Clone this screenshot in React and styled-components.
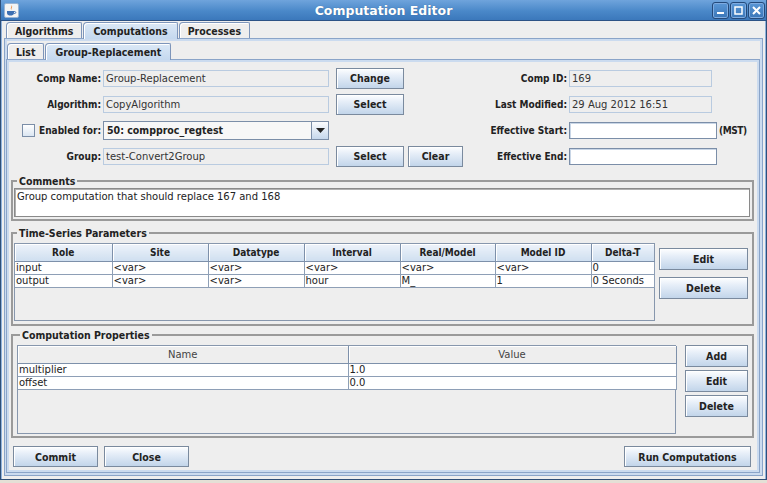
import styled, { createGlobalStyle } from "styled-components";

const GlobalStyle = createGlobalStyle`
  html, body {
    margin: 0;
    padding: 0;
    background: #e4e0d6;
  }
  body {
    width: 767px;
    height: 483px;
    overflow: hidden;
    font-family: "DejaVu Sans", sans-serif;
  }
  * { box-sizing: border-box; }
`;

const BOLD = `"DejaVu Sans Condensed", "DejaVu Sans", sans-serif`;

const Window = styled.div`
  width: 767px;
  height: 480px;
  display: flex;
  flex-direction: column;
  background: #eeeeee;
  border: 1px solid #2f4f78;
  border-top: none;
`;

const TitleBar = styled.div`
  height: 21px;
  flex-shrink: 0;
  display: grid;
  grid-template-columns: 60px 1fr 60px;
  align-items: center;
  background: linear-gradient(#6fa4dc, #4a88c9 55%, #3b78bb);
  border-bottom: 1px solid #2c5285;
  color: #fff;
`;

const Title = styled.div`
  text-align: center;
  font-family: "DejaVu Sans", sans-serif;
  font-weight: bold;
  font-size: 12.5px;
  text-shadow: 0 0 1px rgba(0, 0, 0, 0.3);
`;

const AppIcon = styled.div`
  margin-left: 3px;
  width: 15px;
  height: 15px;
  display: flex;
  align-items: center;
  justify-content: center;
  background: #f4f4f4;
  border: 1px solid #9ab4d4;
  border-radius: 2px;
`;

const Controls = styled.div`
  display: flex;
  justify-content: flex-end;
  gap: 1px;
  padding-right: 1px;
`;

const CtrlButton = styled.div`
  width: 17px;
  height: 17px;
  border: 1px solid #244a7a;
  border-radius: 3px;
  box-shadow: inset 0 0 0 1px #7eabe0;
  background: linear-gradient(#5a97d6, #3a76b8);
  display: flex;
  align-items: center;
  justify-content: center;
`;

const Frame = styled.div`
  flex: 1;
  display: flex;
  flex-direction: column;
  padding: 0 2px 3px 2px;
  border-left: 1px solid #8fb2dc;
  border-right: 1px solid #8fb2dc;
`;

const TabStrip = styled.div`
  display: flex;
  align-items: flex-end;
  height: 17px;
  flex-shrink: 0;
  padding-left: ${(p) => p.$indent}px;
  gap: 1px;
`;

const Tab = styled.div`
  height: ${(p) => (p.$active ? 17 : 16)}px;
  padding: 0 ${(p) => p.$pad || 9}px;
  display: flex;
  align-items: center;
  font-family: ${BOLD};
  font-weight: bold;
  font-size: 10.5px;
  color: #222;
  border: 1px solid #7d95ba;
  border-bottom: none;
  border-radius: 4px 2px 0 0;
  background: ${(p) =>
    p.$active ? "linear-gradient(#dbe8f6, #c4d8ef)" : "#eeeeee"};
  box-shadow: inset 1px 1px 0 #ffffff;
  margin-bottom: ${(p) => (p.$active ? -1 : 0)}px;
  position: relative;
  z-index: ${(p) => (p.$active ? 1 : 0)};
`;

const TabPanel = styled.div`
  flex: 1;
  display: flex;
  flex-direction: column;
  border: 1px solid #8aa4c8;
  box-shadow: inset 0 0 0 2px #cbdbef;
  padding: ${(p) => p.$pad};
`;

const FormArea = styled.div`
  display: flex;
  padding: 5px 0 0 5px;
`;

const Column = styled.div`
  display: flex;
  flex-direction: column;
  width: ${(p) => p.$w}px;
`;

const Row = styled.div`
  height: 26px;
  display: flex;
  align-items: center;
`;

const Label = styled.div`
  width: ${(p) => p.$w}px;
  margin-right: 2px;
  display: flex;
  align-items: center;
  justify-content: flex-end;
  gap: 4px;
  font-family: ${BOLD};
  font-weight: bold;
  font-size: 10px;
  color: #222;
  white-space: nowrap;
`;

const Field = styled.div`
  width: ${(p) => p.$w}px;
  height: 17px;
  display: flex;
  align-items: center;
  padding-left: 2px;
  font-size: 10px;
  color: #333;
  background: ${(p) => (p.$editable ? "#ffffff" : "#eeeeee")};
  border: 1px solid ${(p) => (p.$editable ? "#7b8ea8" : "#b9cbe0")};
  box-shadow: ${(p) => (p.$editable ? "inset 1px 1px 0 #c9d6e6" : "none")};
`;

const Unit = styled.span`
  margin-left: 2px;
  font-family: ${BOLD};
  font-weight: bold;
  font-size: 10px;
  letter-spacing: -0.4px;
  color: #222;
`;

const CheckBox = styled.span`
  width: 13px;
  height: 13px;
  border: 1px solid #7b8ea8;
  background: linear-gradient(#ffffff, #dbe6f2);
`;

const Combo = styled.div`
  width: 226px;
  height: 19px;
  display: flex;
  border: 1px solid #7b8ea8;
  background: #f7f7f7;
`;

const ComboText = styled.div`
  flex: 1;
  display: flex;
  align-items: center;
  padding-left: 3px;
  font-family: ${BOLD};
  font-weight: bold;
  font-size: 10.5px;
  color: #222;
`;

const ComboArrow = styled.div`
  width: 17px;
  display: flex;
  align-items: center;
  justify-content: center;
  border-left: 1px solid #7b8ea8;
  background: linear-gradient(#fbfcfe, #c5d7ec);
`;

const Button = styled.button`
  width: ${(p) => p.$w}px;
  height: ${(p) => p.$h || 21}px;
  margin-left: ${(p) => p.$ml || 0}px;
  padding: 0;
  font-family: ${BOLD};
  font-weight: bold;
  font-size: 10.5px;
  color: #222;
  border: 1px solid #7a8a9e;
  border-radius: 0;
  background: linear-gradient(#fdfeff 0%, #e6eef8 35%, #c2d5ea 100%);
  box-shadow: inset 1px 1px 0 #ffffff;
  flex-shrink: 0;
`;

const Section = styled.fieldset`
  margin: ${(p) => p.$mt}px 4px 0 3px;
  padding: ${(p) => p.$pad};
  border: 2px solid #9a9a9a;
  border-radius: 0;
  min-width: 0;
  display: flex;
`;

const Legend = styled.legend`
  margin-left: 3px;
  padding: 0 2px;
  line-height: 12px;
  font-family: ${BOLD};
  font-weight: bold;
  font-size: 10.5px;
  color: #222;
`;

const Comments = styled.div`
  flex: 1;
  height: 29px;
  background: #fff;
  border: 1px solid #8a8a8a;
  box-shadow: inset 1px 1px 0 #b0b0b0;
  padding: 2px 2px;
  font-size: 10px;
  color: #222;
`;

const ScrollBox = styled.div`
  width: ${(p) => p.$w}px;
  height: ${(p) => p.$h}px;
  border: 1px solid #8797ad;
  background: #eeeeee;
  flex-shrink: 0;
`;

const Grid = styled.table`
  width: 100%;
  border-collapse: collapse;
  table-layout: fixed;
`;

const Head = styled.th`
  height: 17px;
  padding: 0;
  font-family: ${(p) => (p.$plain ? `"DejaVu Sans", sans-serif` : BOLD)};
  font-weight: ${(p) => (p.$plain ? "normal" : "bold")};
  font-size: 10px;
  color: ${(p) => (p.$plain ? "#444" : "#222")};
  text-align: center;
  background: ${(p) =>
    p.$plain ? "#eeeeee" : "linear-gradient(#eef3fa, #cfdff0)"};
  border-right: 1px solid #7d90aa;
  border-bottom: 1px solid #7d90aa;
  box-shadow: inset 1px 1px 0 #ffffff;
  &:last-child {
    border-right: ${(p) => (p.$plain ? "1px solid #7d90aa" : "none")};
  }
`;

const Cell = styled.td`
  height: 13px;
  padding: 0 0 0 1px;
  font-size: 10px;
  line-height: 12px;
  color: #222;
  background: #fff;
  border: 1px solid #8e9fb6;
  border-top: none;
  white-space: nowrap;
  overflow: hidden;
  &:first-child {
    border-left: none;
  }
`;

const ButtonColumn = styled.div`
  display: flex;
  flex-direction: column;
  gap: ${(p) => p.$gap}px;
  padding-top: ${(p) => p.$top}px;
  margin-left: ${(p) => p.$ml}px;
`;

const BottomBar = styled.div`
  display: flex;
  align-items: center;
  gap: 6px;
  padding: 8px 7px 0 5px;
`;

const Spacer = styled.div`
  flex: 1;
`;

const JavaIcon = () => (
  <svg width="11" height="12" viewBox="0 0 11 12">
    <path d="M5 1 C7 3 3 4 6 6 C4 4 8 3 5 1 Z" fill="#e8761e" />
    <path d="M1 7 H8 V9 C8 11 6 11.5 4.5 11.5 C3 11.5 1 11 1 9 Z" fill="#3d6fb2" />
    <path d="M8 7.5 C10.5 7.5 10.5 9.5 8 9.5" stroke="#3d6fb2" fill="none" />
  </svg>
);

const tsColumns = ["Role", "Site", "Datatype", "Interval", "Real/Model", "Model ID", "Delta-T"];
const tsWidths = [97, 96, 96, 96, 95, 96, 63];
const tsRows = [
  ["input", "<var>", "<var>", "<var>", "<var>", "<var>", "0"],
  ["output", "<var>", "<var>", "hour", "M_", "1", "0 Seconds"],
];

const props = [
  ["multiplier", "1.0"],
  ["offset", "0.0"],
];

export default function App() {
  return (
    <>
      <GlobalStyle />
      <Window>
        <TitleBar>
          <AppIcon>
            <JavaIcon />
          </AppIcon>
          <Title>Computation Editor</Title>
          <Controls>
            <CtrlButton>
              <svg width="9" height="9" viewBox="0 0 9 9">
                <rect x="1" y="6" width="7" height="2" fill="#fff" />
              </svg>
            </CtrlButton>
            <CtrlButton>
              <svg width="9" height="9" viewBox="0 0 9 9">
                <rect x="1" y="1" width="7" height="7" fill="none" stroke="#fff" strokeWidth="1.5" />
              </svg>
            </CtrlButton>
            <CtrlButton>
              <svg width="9" height="9" viewBox="0 0 9 9">
                <path d="M1 1 L8 8 M8 1 L1 8" stroke="#fff" strokeWidth="2" />
              </svg>
            </CtrlButton>
          </Controls>
        </TitleBar>

        <Frame>
          <TabStrip $indent={2}>
            <Tab $pad={8}>Algorithms</Tab>
            <Tab $active $pad={9}>Computations</Tab>
            <Tab $pad={8}>Processes</Tab>
          </TabStrip>
          <TabPanel $pad="3px 2px 2px 1px">
            <TabStrip $indent={1}>
              <Tab $pad={8}>List</Tab>
              <Tab $active $pad={9}>Group-Replacement</Tab>
            </TabStrip>
            <TabPanel $pad="0 1px 3px 1px">
              <FormArea>
                <Column $w={453}>
                  <Row>
                    <Label $w={88}>Comp Name:</Label>
                    <Field $w={226}>Group-Replacement</Field>
                    <Button $w={68} $ml={7}>Change</Button>
                  </Row>
                  <Row>
                    <Label $w={88}>Algorithm:</Label>
                    <Field $w={226}>CopyAlgorithm</Field>
                    <Button $w={68} $ml={7}>Select</Button>
                  </Row>
                  <Row>
                    <Label $w={88}>
                      <CheckBox />
                      Enabled for:
                    </Label>
                    <Combo>
                      <ComboText>50: compproc_regtest</ComboText>
                      <ComboArrow>
                        <svg width="9" height="5" viewBox="0 0 9 5">
                          <path d="M0 0 H9 L4.5 5 Z" fill="#222" />
                        </svg>
                      </ComboArrow>
                    </Combo>
                  </Row>
                  <Row>
                    <Label $w={88}>Group:</Label>
                    <Field $w={226}>test-Convert2Group</Field>
                    <Button $w={68} $ml={7}>Select</Button>
                    <Button $w={55} $ml={4}>Clear</Button>
                  </Row>
                </Column>
                <Column $w={290}>
                  <Row>
                    <Label $w={101}>Comp ID:</Label>
                    <Field $w={143}>169</Field>
                  </Row>
                  <Row>
                    <Label $w={101}>Last Modified:</Label>
                    <Field $w={143}>29 Aug 2012 16:51</Field>
                  </Row>
                  <Row>
                    <Label $w={101}>Effective Start:</Label>
                    <Field $w={148} $editable />
                    <Unit>(MST)</Unit>
                  </Row>
                  <Row>
                    <Label $w={101}>Effective End:</Label>
                    <Field $w={148} $editable />
                  </Row>
                </Column>
              </FormArea>

              <Section $mt={6} $pad="1px 2px 2px 1px">
                <Legend>Comments</Legend>
                <Comments>Group computation that should replace 167 and 168</Comments>
              </Section>

              <Section $mt={6} $pad="4px 2px 3px 1px">
                <Legend>Time-Series Parameters</Legend>
                <ScrollBox $w={641} $h={78}>
                  <Grid>
                    <colgroup>
                      {tsWidths.map((w, i) => (
                        <col key={i} style={{ width: w }} />
                      ))}
                    </colgroup>
                    <thead>
                      <tr>
                        {tsColumns.map((c) => (
                          <Head key={c}>{c}</Head>
                        ))}
                      </tr>
                    </thead>
                    <tbody>
                      {tsRows.map((r, i) => (
                        <tr key={i}>
                          {r.map((v, j) => (
                            <Cell key={j}>{v}</Cell>
                          ))}
                        </tr>
                      ))}
                    </tbody>
                  </Grid>
                </ScrollBox>
                <ButtonColumn $gap={7} $top={5} $ml={4}>
                  <Button $w={89} $h={22}>Edit</Button>
                  <Button $w={89} $h={22}>Delete</Button>
                </ButtonColumn>
              </Section>

              <Section $mt={3} $pad="4px 2px 2px 4px">
                <Legend>Computation Properties</Legend>
                <ScrollBox $w={659} $h={89}>
                  <Grid>
                    <colgroup>
                      <col style={{ width: 330 }} />
                      <col style={{ width: 328 }} />
                    </colgroup>
                    <thead>
                      <tr>
                        <Head $plain>Name</Head>
                        <Head $plain>Value</Head>
                      </tr>
                    </thead>
                    <tbody>
                      {props.map((r, i) => (
                        <tr key={i}>
                          {r.map((v, j) => (
                            <Cell key={j}>{v}</Cell>
                          ))}
                        </tr>
                      ))}
                    </tbody>
                  </Grid>
                </ScrollBox>
                <ButtonColumn $gap={3} $top={0} $ml={9}>
                  <Button $w={63} $h={22}>Add</Button>
                  <Button $w={63} $h={22}>Edit</Button>
                  <Button $w={63} $h={22}>Delete</Button>
                </ButtonColumn>
              </Section>

              <BottomBar>
                <Button $w={85}>Commit</Button>
                <Button $w={85}>Close</Button>
                <Spacer />
                <Button $w={127}>Run Computations</Button>
              </BottomBar>
            </TabPanel>
          </TabPanel>
        </Frame>
      </Window>
    </>
  );
}
